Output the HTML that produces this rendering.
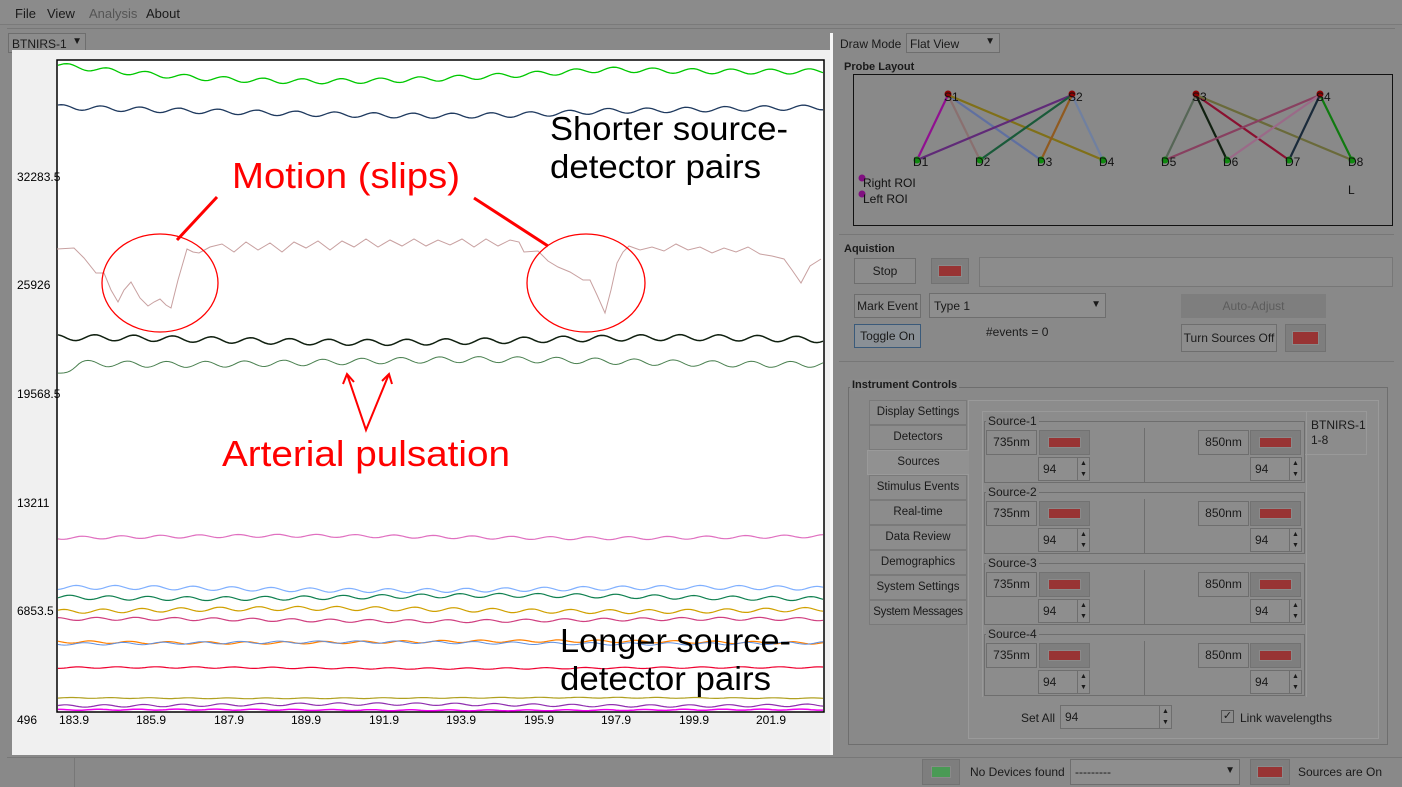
<!DOCTYPE html>
<html><head><meta charset="utf-8"><style>
*{box-sizing:border-box}
body{margin:0;width:1402px;height:787px;overflow:hidden;background:#898989;font-family:"Liberation Sans",sans-serif;font-size:12px;color:#1a1a1a;position:relative}
.a{position:absolute}
.btn{position:absolute;background:#8c8c8c;border:1px solid #6e6e6e;text-align:center;color:#1a1a1a;white-space:nowrap}
.sw{position:absolute;background:#7e7e7e;border:1px solid #727272}
.sw i{position:absolute;left:8px;right:8px;top:6px;bottom:6px;background:#983434;border:1px solid #8a8a8a}
.tab{position:absolute;left:869px;width:98px;height:25px;background:#8c8c8c;border:1px solid #7a7a7a;text-align:center;line-height:23px;white-space:nowrap;font-size:11.5px}
.grp{position:absolute;border:1px solid #6e6e6e}
.lbl{position:absolute;background:#8a8a8a;padding:0 2px}
.spin{position:absolute;background:#8e8e8e;border:1px solid #6e6e6e;padding-left:4px;line-height:22px}
.spin b{position:absolute;right:0;top:0;bottom:0;width:12px;border-left:1px solid #6e6e6e;font-size:7px;line-height:11px;text-align:center;font-weight:normal}
</style></head><body>
<div class="a" style="left:0;top:0;width:1402px;height:25px;background:#8b8b8b;border-bottom:1px solid #7a7a7a"></div>
<div class="a" style="left:15px;top:6px;font-size:13px">File</div>
<div class="a" style="left:47px;top:6px;font-size:13px">View</div>
<div class="a" style="left:89px;top:6px;font-size:13px;color:#555">Analysis</div>
<div class="a" style="left:146px;top:6px;font-size:13px">About</div>
<div class="a" style="left:7px;top:28px;width:1388px;height:1px;background:#777"></div>
<div class="a" style="left:8px;top:33px;width:78px;height:20px;border:1px solid #6e6e6e;background:#8c8c8c;padding:3px 0 0 3px;font-size:12px">BTNIRS-1<span style="position:absolute;right:3px;top:2px;font-size:10px">▼</span></div>
<div class="a" style="left:12px;top:50px;width:818px;height:705px;background:#f0f0f0"></div>
<div class="a" style="left:830px;top:33px;width:3px;height:722px;background:#f6f6f6"></div>
<svg class="a" style="left:0;top:0" width="840" height="757" id="ch">
<rect x="57" y="60" width="767" height="652" fill="#fff" stroke="#000" stroke-width="1.5"/>
<g font-family="Liberation Sans" font-size="12" fill="#000">
<text x="17" y="181">32283.5</text><text x="17" y="289">25926</text><text x="17" y="398">19568.5</text><text x="17" y="507">13211</text><text x="17" y="615">6853.5</text><text x="17" y="724">496</text>
<text x="59" y="724">183.9</text><text x="136" y="724">185.9</text><text x="214" y="724">187.9</text><text x="291" y="724">189.9</text><text x="369" y="724">191.9</text><text x="446" y="724">193.9</text><text x="524" y="724">195.9</text><text x="601" y="724">197.9</text><text x="679" y="724">199.9</text><text x="756" y="724">201.9</text>
</g>
<g id="tr" fill="none" stroke-width="1.3"></g>
<polyline fill="none" stroke="#c8a0a0" stroke-width="1" points="57,249 74,248 84,258 96,273 104,273 111,290 118,302 124,290 131,282 140,298 148,306 154,302 160,299 166,305 171,308 178,280 187,249 193,252 199,253 210,247 222,244 234,252 246,242 258,250 270,243 282,252 294,242 306,248 318,241 330,250 342,241 354,247 366,239 378,247 390,240 402,246 414,239 426,246 438,240 450,245 462,239 474,247 486,239 498,246 510,240 519,242 524,252 538,251 548,261 558,267 570,272 583,280 590,280 597,295 605,313 611,290 617,263 623,252 629,246 640,250 652,247 664,251 676,244 688,250 700,247 712,253 724,248 736,252 748,247 760,254 772,256 784,259 792,270 801,283 810,266 821,259"/>
<ellipse cx="160" cy="283" rx="58" ry="49" fill="none" stroke="#f00" stroke-width="1.3"/>
<ellipse cx="586" cy="283" rx="59" ry="49" fill="none" stroke="#f00" stroke-width="1.3"/>
<line x1="217" y1="197" x2="177" y2="240" stroke="#f00" stroke-width="3"/>
<line x1="474" y1="198" x2="548" y2="246" stroke="#f00" stroke-width="3"/>
<g stroke="#f00" stroke-width="2" fill="none"><polyline points="347,374 366,430 389,374"/><polyline points="343,384 347,374 354,382"/><polyline points="382,381 389,374 392,384"/></g>
<g font-family="Liberation Sans" font-size="36" fill="#f00"><text x="232" y="188" textLength="228" lengthAdjust="spacingAndGlyphs">Motion (slips)</text><text x="222" y="466" textLength="288" lengthAdjust="spacingAndGlyphs">Arterial pulsation</text></g>
<g font-family="Liberation Sans" font-size="33" fill="#000"><text x="550" y="140" textLength="238" lengthAdjust="spacingAndGlyphs">Shorter source-</text><text x="550" y="178" textLength="211" lengthAdjust="spacingAndGlyphs">detector pairs</text><text x="560" y="652" textLength="231" lengthAdjust="spacingAndGlyphs">Longer source-</text><text x="560" y="690" textLength="211" lengthAdjust="spacingAndGlyphs">detector pairs</text></g>
</svg>
<script>
(function(){
var T=[[64,18,'#00c800',2.5,1.3],[106,10,'#1f3a5f',2.5,1.3],[340,-2,'#102010',3,1.5],[362,0,'#4a8050',3,1],[537,0,'#e070c0',1.5,1.2],[589,0,'#80b0ff',2,1.2],[597,0,'#108050',2,1.2],[610,0,'#d0a000',2,1.2],[620,0,'#d04080',1.5,1.2],[642,0,'#ff8000',1.2,1.2],[643,0,'#6090e0',1.2,1],[668,0,'#f00030',.7,1.2],[698,0,'#b0a020',.4,1.2],[705,0,'#9030b0',1.2,1.2],[710,0,'#f000f0',.5,1.5]];
var g=document.getElementById('tr'),s='';
T.forEach(function(t,k){var p=[];for(var x=58;x<=823;x+=3){var u=(x-58)/765;var y=t[0]+t[1]*Math.sin(Math.min(1,u*1.4)*Math.PI*0.9)*(k<2?1:0)+t[3]*Math.sin(2*Math.PI*x/39+k)+0.8*t[3]*Math.sin(x/97+k*2);if(k==3&&x<80)y+=(80-x)/2;if(k<2)y=Math.max(62,y);p.push(x+','+y.toFixed(1));}
s+='<polyline stroke="'+t[2]+'" stroke-width="'+t[4]+'" points="'+p.join(' ')+'"/>';});
g.innerHTML=s;})();
</script>
<div class="a" style="left:7px;top:757px;width:1395px;height:1px;background:#777"></div>
<div class="a" style="left:0;top:758px;width:75px;height:29px;border-right:1px solid #777"></div>
<div class="sw" style="left:922px;top:759px;width:38px;height:26px"><i style="background:#4a9a55"></i></div>
<div class="a" style="left:970px;top:765px">No Devices found</div>
<div class="a" style="left:1070px;top:759px;width:170px;height:26px;border:1px solid #6e6e6e;background:#8e8e8e;padding:5px 4px">---------<span style="position:absolute;right:4px;top:5px;font-size:10px">▼</span></div>
<div class="sw" style="left:1250px;top:759px;width:40px;height:26px"><i style="left:6px;right:6px"></i></div>
<div class="a" style="left:1298px;top:765px">Sources are On</div>
<div class="a" style="left:840px;top:37px">Draw Mode</div>
<div class="a" style="left:906px;top:33px;width:94px;height:20px;border:1px solid #6e6e6e;background:#8e8e8e;padding:3px 3px">Flat View<span style="position:absolute;right:4px;top:2px;font-size:10px">▼</span></div>
<div class="a" style="left:844px;top:61px;font-weight:bold;font-size:11px">Probe Layout</div>
<div class="a" style="left:853px;top:74px;width:540px;height:152px;border:1px solid #111"></div>
<svg class="a" style="left:0;top:0" width="1402" height="240">
<g stroke-width="2.2">
<line x1="948" y1="95" x2="917" y2="160" stroke="#901090"/><line x1="948" y1="95" x2="980" y2="160" stroke="#8a7070"/><line x1="948" y1="95" x2="1041" y2="160" stroke="#6070a0"/><line x1="948" y1="95" x2="1103" y2="160" stroke="#807018"/>
<line x1="1072" y1="95" x2="917" y2="160" stroke="#602a78"/><line x1="1072" y1="95" x2="980" y2="160" stroke="#1a5a3a"/><line x1="1072" y1="95" x2="1041" y2="160" stroke="#905a20"/><line x1="1072" y1="95" x2="1103" y2="160" stroke="#7080a0"/>
<line x1="1196" y1="95" x2="1165" y2="160" stroke="#566656"/><line x1="1196" y1="95" x2="1227" y2="160" stroke="#102010"/><line x1="1196" y1="95" x2="1289" y2="160" stroke="#8a1030"/><line x1="1196" y1="95" x2="1352" y2="160" stroke="#6a6a3a"/>
<line x1="1320" y1="95" x2="1165" y2="160" stroke="#884060"/><line x1="1320" y1="95" x2="1227" y2="160" stroke="#9a6a88"/><line x1="1320" y1="95" x2="1289" y2="160" stroke="#1a2a3a"/><line x1="1320" y1="95" x2="1352" y2="160" stroke="#107a10"/>
</g>
<g fill="#900000"><circle cx="948" cy="94" r="3.5"/><circle cx="1072" cy="94" r="3.5"/><circle cx="1196" cy="94" r="3.5"/><circle cx="1320" cy="94" r="3.5"/></g>
<g fill="#108a10"><circle cx="917" cy="160" r="3.5"/><circle cx="980" cy="160" r="3.5"/><circle cx="1041" cy="160" r="3.5"/><circle cx="1103" cy="160" r="3.5"/><circle cx="1165" cy="160" r="3.5"/><circle cx="1227" cy="160" r="3.5"/><circle cx="1289" cy="160" r="3.5"/><circle cx="1352" cy="160" r="3.5"/></g>
<g fill="#801080"><circle cx="862" cy="178" r="3.5"/><circle cx="862" cy="194" r="3.5"/></g>
<g font-family="Liberation Sans" font-size="12" fill="#111">
<text x="944" y="101">S1</text><text x="1068" y="101">S2</text><text x="1192" y="101">S3</text><text x="1316" y="101">S4</text>
<text x="913" y="166">D1</text><text x="975" y="166">D2</text><text x="1037" y="166">D3</text><text x="1099" y="166">D4</text><text x="1161" y="166">D5</text><text x="1223" y="166">D6</text><text x="1285" y="166">D7</text><text x="1348" y="166">D8</text>
<text x="863" y="187">Right ROI</text><text x="863" y="203">Left ROI</text><text x="1348" y="194">L</text></g>
</svg>
<div class="a" style="left:839px;top:234px;width:555px;height:1px;background:#777"></div>
<div class="a" style="left:844px;top:243px;font-weight:bold;font-size:11px">Aquistion</div>
<div class="btn" style="left:854px;top:258px;width:62px;height:26px;line-height:24px">Stop</div>
<div class="sw" style="left:931px;top:258px;width:38px;height:26px"><i style="left:6px;right:6px"></i></div>
<div class="a" style="left:979px;top:257px;width:414px;height:30px;border:1px solid #777;background:#8c8c8c"></div>
<div class="btn" style="left:854px;top:294px;width:67px;height:24px;line-height:22px">Mark Event</div>
<div class="a" style="left:929px;top:293px;width:177px;height:25px;border:1px solid #6e6e6e;background:#8e8e8e;padding:5px 4px">Type 1<span style="position:absolute;right:4px;top:5px;font-size:10px">▼</span></div>
<div class="btn" style="left:1181px;top:294px;width:145px;height:24px;line-height:22px;background:#7e7e7e;color:#5c5c5c;border-color:#7e7e7e">Auto-Adjust</div>
<div class="btn" style="left:854px;top:324px;width:67px;height:24px;line-height:22px;background:#8a9096;border-color:#3a5a7a">Toggle On</div>
<div class="a" style="left:986px;top:325px">#events = 0</div>
<div class="btn" style="left:1181px;top:324px;width:96px;height:28px;line-height:26px">Turn Sources Off</div>
<div class="sw" style="left:1285px;top:324px;width:41px;height:28px"><i style="left:6px;right:6px"></i></div>
<div class="a" style="left:839px;top:361px;width:555px;height:1px;background:#777"></div>
<div class="a" style="left:848px;top:387px;width:540px;height:358px;border:1px solid #6e6e6e"></div>
<div class="lbl" style="left:850px;top:379px;font-weight:bold;font-size:11px">Instrument Controls</div>
<div class="a" style="left:968px;top:400px;width:411px;height:339px;border:1px solid #9a9a9a;background:#8c8c8c"></div>
<div class="tab" style="top:400px">Display Settings</div>
<div class="tab" style="top:425px">Detectors</div>
<div class="tab" style="top:450px;left:867px;width:102px;background:#919191;border-color:#9a9a9a;border-right:none">Sources</div>
<div class="tab" style="top:475px">Stimulus Events</div>
<div class="tab" style="top:500px">Real-time</div>
<div class="tab" style="top:525px">Data Review</div>
<div class="tab" style="top:550px">Demographics</div>
<div class="tab" style="top:575px">System Settings</div>
<div class="tab" style="top:600px;letter-spacing:-0.3px">System Messages</div>
<div class="a" style="left:982px;top:411px;width:325px;height:286px;border:1px solid #999;border-bottom:none"></div>
<div class="a" style="left:1305px;top:411px;width:62px;height:44px;border:1px solid #999;border-left:none;padding:6px 0 0 6px;line-height:15px">BTNIRS-1<br>1-8</div>
<div id="srcs"></div>
<script>
(function(){var h='';for(var i=0;i<4;i++){var y=421+i*71;
h+='<div class="grp" style="left:984px;top:'+y+'px;width:321px;height:62px"></div>';
h+='<div class="lbl" style="left:986px;top:'+(y-7)+'px">Source-'+(i+1)+'</div>';
h+='<div class="a" style="left:1144px;top:'+(y+7)+'px;width:1px;height:55px;background:#6e6e6e"></div>';
h+='<div class="btn" style="left:986px;top:'+(y+9)+'px;width:51px;height:25px;line-height:23px">735nm</div>';
h+='<div class="sw" style="left:1039px;top:'+(y+9)+'px;width:51px;height:25px"><i></i></div>';
h+='<div class="spin" style="left:1038px;top:'+(y+36)+'px;width:52px;height:24px">94<b>▲<br>▼</b></div>';
h+='<div class="btn" style="left:1198px;top:'+(y+9)+'px;width:51px;height:25px;line-height:23px">850nm</div>';
h+='<div class="sw" style="left:1250px;top:'+(y+9)+'px;width:51px;height:25px"><i></i></div>';
h+='<div class="spin" style="left:1250px;top:'+(y+36)+'px;width:52px;height:24px">94<b>▲<br>▼</b></div>';}
document.getElementById('srcs').innerHTML=h;})();
</script>
<div class="a" style="left:1021px;top:711px">Set All</div>
<div class="spin" style="left:1060px;top:705px;width:112px;height:24px">94<b>▲<br>▼</b></div>
<div class="a" style="left:1221px;top:710px;width:13px;height:13px;border:1px solid #555;font-size:11px;line-height:11px;text-align:center">✓</div>
<div class="a" style="left:1240px;top:711px">Link wavelengths</div>
</body></html>
